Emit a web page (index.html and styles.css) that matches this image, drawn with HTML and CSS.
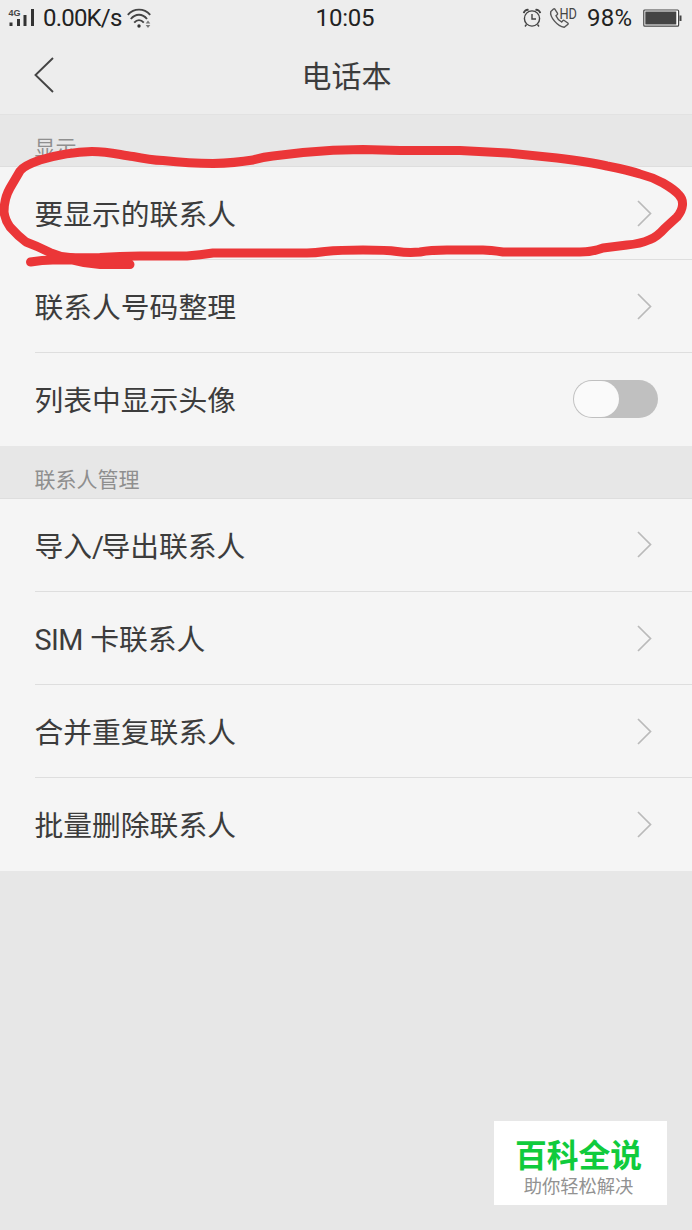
FILE: index.html
```html
<!DOCTYPE html>
<html lang="zh-CN">
<head>
<meta charset="utf-8">
<title>电话本</title>
<link rel="stylesheet" href="styles.css">
</head>
<body>
<div class="screen">
  <header class="top">
    <div class="status">
      <div class="status-left">
        <svg class="signal" width="28" height="20" viewBox="0 0 28 20"><text class="net" x="0.500" y="8">4G</text><path d="M1.500 14.500h3v3.500h-3zM9 11h3v7H9zM15.500 7h3v11h-3zM23 1h3v17h-3z" fill="#333"/></svg>
        <span class="speed">0.00K/s</span>
        <svg class="wifi" width="24" height="21" viewBox="0 0 24 21" fill="none" stroke="#444" stroke-width="1.900"><path d="M.8 6.800C7-.1 17-.1 23.200 6.800M3.800 11C8.500 5.300 15.500 5.300 20 11M7.200 14.700c3-3.500 6.600-3.500 9.600 0"/><circle cx="12" cy="18" r="1.700" fill="#333" stroke="none"/><path d="M18.700 15.500l2.300-3 2.300 3zM18.700 17l2.300 3 2.300-3z" fill="#777" stroke="none"/></svg>
      </div>
      <span class="clock">10:05</span>
      <div class="status-right">
        <svg width="20" height="20" viewBox="0 0 20 20" fill="none" stroke="#444" stroke-width="1.400"><circle cx="10" cy="10.500" r="7.600"/><path d="M10 6v5h4M4.500 16.500L3 18.500M15.500 16.500l1.500 2"/><path d="M1.800 5.200A4 4 0 0 1 6.500 1.900M13.500 1.900A4 4 0 0 1 18.200 5.200" stroke-width="2"/></svg>
        <svg class="call" width="30" height="31" viewBox="0 0 30 31"><path d="M4.500 6L1.800 8.500C.5 14 8.500 23.500 15.200 24.200L19 21.300Q19.500 20.600 18.800 20L15.200 17.500Q14.500 17 13.800 17.700L12.600 19Q8.500 16.500 7 12.700L8.300 11.500Q8.900 10.900 8.400 10.100L6 6.300Q5.300 5.500 4.500 6Z" fill="none" stroke="#555" stroke-width="1.400"/><text class="hd" x="10.500" y="15.500" textLength="17.500" lengthAdjust="spacingAndGlyphs">HD</text></svg>
        <span class="percent">98%</span>
        <svg width="39" height="19" viewBox="0 0 39 19"><rect x=".8" y="1" width="34.800" height="16.200" rx="1" fill="#fff" stroke="#444" stroke-width="1.200"/><path d="M2.300 2.600h31v13H2.300zM36.500 6.500h2v5.500h-2z" fill="#444"/></svg>
      </div>
    </div>
    <div class="titlebar">
      <svg class="back" width="20" height="36" viewBox="0 0 20 36" fill="none" stroke="#444" stroke-width="1.900"><path d="M19 1L1.500 18 19 35"/></svg>
      <h1 class="title">电话本</h1>
    </div>
  </header>
  <h2 class="section">显示</h2>
  <ul class="list">
    <li class="row"><span class="label">要显示的联系人</span><svg class="chevron" viewBox="0 0 15 27"><path d="M1 1l12.500 12.500L1 26"/></svg></li>
    <li class="row"><span class="label">联系人号码整理</span><svg class="chevron" viewBox="0 0 15 27"><path d="M1 1l12.500 12.500L1 26"/></svg></li>
    <li class="row"><span class="label">列表中显示头像</span><span class="toggle"><span class="knob"></span></span></li>
  </ul>
  <h2 class="section section-manage">联系人管理</h2>
  <ul class="list">
    <li class="row"><span class="label">导入<span class="slash">/</span>导出联系人</span><svg class="chevron" viewBox="0 0 15 27"><path d="M1 1l12.500 12.500L1 26"/></svg></li>
    <li class="row"><span class="label"><span class="latin">SIM</span> 卡联系人</span><svg class="chevron" viewBox="0 0 15 27"><path d="M1 1l12.500 12.500L1 26"/></svg></li>
    <li class="row"><span class="label">合并重复联系人</span><svg class="chevron" viewBox="0 0 15 27"><path d="M1 1l12.500 12.500L1 26"/></svg></li>
    <li class="row"><span class="label">批量删除联系人</span><svg class="chevron" viewBox="0 0 15 27"><path d="M1 1l12.500 12.500L1 26"/></svg></li>
  </ul>
  <svg class="marker" width="692" height="290" viewBox="0 0 692 290">
    <path d="M4 212C4 204 6 195 10 188L20 171Q23 166 40 160Q67 152 92 151.500C110 151.500 120 155 133 156.500Q150 160 163 160.500Q190 163.500 213 163.500Q235 163 253 160Q263 157 273 156L303 152.500Q333 149.500 363 149.500L400 150.500H460L507 153L557 158Q590 162 607 166Q628 170 640 174Q652 177 663 183Q675 190 679 195Q683 199 682.500 205Q682 211 677 217L665 228Q657 237 650 239.500Q640 244 627 245L603 248Q592 252 580 252H503Q490 250 483 250H447Q430 250 420 252Q408 253 397 251.500Q387 250 363 250Q340 250 325 251.500Q315 253 307 253H213Q200 255 187 256H140Q120 256 100 257.500Q80 258 70 257.500Q60 257 50 252.500Q37 246 26 242Q18 236 10 227Q5 220 4 212Z"/>
    <path d="M30.500 262Q42 260 53 260H72Q86 264 100 264.500H130"/>
    <path d="M70 258L105 262 128 260"/>
  </svg>
  <aside class="brand">
    <strong class="brand-name">百科全说</strong>
    <span class="brand-tag">助你轻松解决</span>
  </aside>
</div>
</body>
</html>
```

FILE: styles.css
```css
* { box-sizing: border-box; }
body { margin: 0; }
.screen {
  position: relative;
  width: 692px;
  height: 1230px;
  overflow: hidden;
  background: #e7e7e7;
  color: #3c3c3c;
  font-family: Roboto, "Noto Sans CJK SC", sans-serif;
}
svg { display: block; flex: none; }
.top { height: 115px; background: #ededed; border-bottom: 1px solid #e2e2e2; }
.status {
  display: grid;
  grid-template-columns: 1fr auto 1fr;
  align-items: center;
  height: 36px;
  padding: 0 10px 0 8px;
  font-size: 24px;
  line-height: 36px;
  color: #222;
}
.status-left, .status-right { display: flex; align-items: center; }
.status-right { justify-content: flex-end; }
.signal { margin-right: 7px; }
.net { font: bold 9px "Liberation Sans", sans-serif; fill: #444; }
.speed { width: 80px; letter-spacing: -.8px; }
.wifi { margin-left: 4px; }
.clock { letter-spacing: -.2px; }
.call { margin: 0 8px 0 7px; }
.hd { font: 14.500px Roboto, sans-serif; fill: #444; }
.percent { width: 47px; margin-right: 9px; letter-spacing: .2px; }
.titlebar {
  display: grid;
  grid-template-columns: 1fr auto 1fr;
  align-items: center;
  height: 78px;
  padding: 0 33px 0 34px;
}
.title { margin: 0; padding-top: 3px; font-size: 30px; line-height: 44px; font-weight: 400; }
.section {
  margin: 0;
  height: 52px;
  padding: 17px 34.500px 0;
  font-size: 21px;
  line-height: 32px;
  font-weight: 400;
  color: #8f8f8f;
  border-bottom: 1px solid #dedede;
}
.section-manage { height: 53px; padding-top: 18px; }
.list { margin: 0; padding: 0 0 0 35px; list-style: none; background: #f5f5f5; }
.row {
  display: flex;
  align-items: center;
  justify-content: space-between;
  height: 93.200px;
  padding-right: 40px;
  border-bottom: 1px solid #dedede;
  font-size: 28.800px;
  line-height: 42px;
}
.row:last-child { height: 92.400px; border-bottom-color: transparent; }
.label { margin-left: -.6px; padding-top: 4px; }
.latin { letter-spacing: -.5px; }
.slash { letter-spacing: -2.500px; }
.chevron { width: 15px; height: 27px; fill: none; stroke: #bababa; stroke-width: 1.700; }
.toggle { width: 85px; height: 38px; margin-right: -5.500px; padding: 1px; border-radius: 19px; background: #c0c0c0; }
.knob { display: block; width: 45px; height: 36px; border-radius: 18px; background: #fafafa; }
.marker {
  position: absolute;
  top: 0;
  left: 0;
  fill: none;
  stroke: #eb3638;
  stroke-width: 9px;
  stroke-linecap: round;
  stroke-linejoin: round;
}
.brand {
  position: absolute;
  left: 494px;
  top: 1121px;
  width: 173px;
  height: 84px;
  padding-top: 15px;
  display: flex;
  flex-direction: column;
  align-items: center;
  background: #fff;
}
.brand-name { font-size: 31.800px; line-height: 40px; font-weight: 700; color: #10cb3c; padding-right: 4px; }
.brand-tag { font-size: 18.300px; line-height: 21px; color: #929292; padding-right: 4px; }
```
